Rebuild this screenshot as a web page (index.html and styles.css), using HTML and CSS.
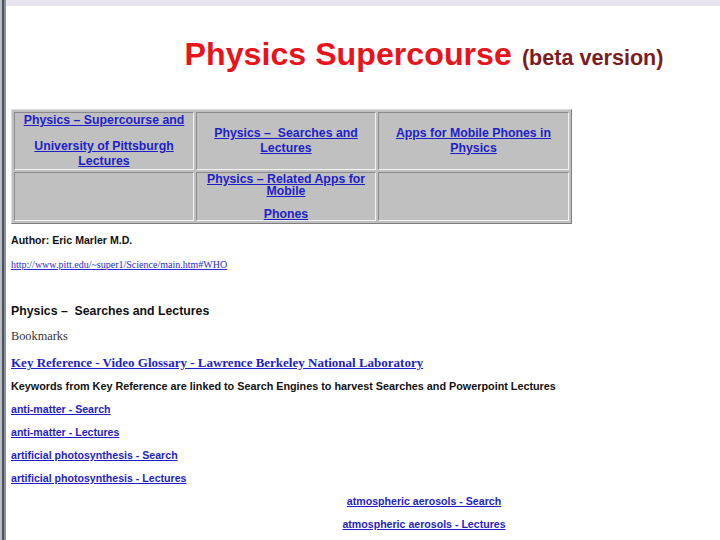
FILE: index.html
```html
<!DOCTYPE html>
<html lang="en">
<head>
<meta charset="utf-8">
<title>Physics Supercourse</title>
<link rel="stylesheet" href="styles.css">
</head>
<body>
<div class="frame">
  <div class="rail"></div>
  <div class="page">
    <div class="topbar"></div>
    <main class="content">
      <h1 class="title shifted">Physics Supercourse <span class="beta">(beta version)</span></h1>

      <table class="nav">
        <tr class="r1">
          <td class="c1">
            <p><a href="#">Physics – Supercourse and</a></p>
            <p><a href="#">University of Pittsburgh Lectures</a></p>
          </td>
          <td class="c2"><a href="#">Physics –&nbsp; Searches and Lectures</a></td>
          <td class="c3"><a href="#">Apps for Mobile Phones in Physics</a></td>
        </tr>
        <tr class="r2">
          <td class="c1"></td>
          <td class="c2 tight">
            <p><a href="#">Physics – Related Apps for Mobile</a></p>
            <p><a href="#">Phones</a></p>
          </td>
          <td class="c3"></td>
        </tr>
      </table>

      <p class="author">Author: Eric Marler M.D.</p>
      <p class="url"><a href="#">http://www.pitt.edu/~super1/Science/main.htm#WHO</a></p>

      <h2 class="section">Physics –&nbsp; Searches and Lectures</h2>
      <p class="bookmarks">Bookmarks</p>
      <p class="keyref"><a href="#">Key Reference - Video Glossary - Lawrence Berkeley National Laboratory</a></p>
      <p class="keywords">Keywords from Key Reference are linked to Search Engines to harvest Searches and Powerpoint Lectures</p>

      <p class="kw"><a href="#">anti-matter - Search</a></p>
      <p class="kw"><a href="#">anti-matter - Lectures</a></p>
      <p class="kw"><a href="#">artificial photosynthesis - Search</a></p>
      <p class="kw"><a href="#">artificial photosynthesis - Lectures</a></p>
      <p class="kw shifted"><a href="#">atmospheric aerosols - Search</a></p>
      <p class="kw shifted"><a href="#">atmospheric aerosols - Lectures</a></p>
    </main>
  </div>
</div>
</body>
</html>
```

FILE: styles.css
```css
html, body {
  margin: 0;
  padding: 0;
  background: #ffffff;
  overflow: hidden;
}

.frame {
  display: flex;
  height: 540px;
}

.rail {
  flex: none;
  width: 6px;
  background: linear-gradient(to right, #b9bdc6 0, #b9bdc6 2px, #4b505b 2px, #4b505b 4px, #8a92a2 4px, #8a92a2 6px);
}

.page {
  flex: 1;
  min-width: 0;
}

.topbar {
  height: 6px;
  background: #e7e3ef;
}

.content {
  padding-left: 5px;
  font-family: "Liberation Sans", Arial, sans-serif;
  color: #111111;
}

.content p {
  margin: 0;
}

.content a {
  color: #1e1ec8;
  text-decoration: underline;
}

/* centred blocks: the page's centre line sits at x=424 */
.shifted {
  padding-left: 117px;
  text-align: center;
}

.title {
  margin: 30px 0 0;
  font-size: 32.2px;
  line-height: 37px;
  font-weight: bold;
  color: #e8131b;
}

.beta {
  font-size: 21.6px;
  line-height: 1;
  color: #7b1c21;
  margin-left: 1px;
}

.nav {
  margin-top: 36px;
  width: 561px;
  table-layout: fixed;
  border-collapse: separate;
  border-spacing: 2px;
  border: 1px solid;
  border-color: #dcdcdc #7f7f7f #7f7f7f #dcdcdc;
  background: #c0c0c0;
}

.nav td {
  box-sizing: border-box;
  border: 1px solid;
  border-color: #8a8a8a #f2f2f2 #f2f2f2 #8a8a8a;
  padding: 0 1px;
  text-align: center;
  vertical-align: middle;
  font-size: 12.3px;
  font-weight: bold;
  line-height: 15px;
}

.nav .c1 { width: 180px; }
.nav .c2 { width: 180px; }
.nav .c3 { width: 191px; }

.nav .r1 td { height: 57px; }
.nav .r2 td { height: 49px; }

.nav td p + p {
  margin-top: 11px;
}

.nav td.tight {
  line-height: 12px;
}

.author {
  margin-top: 10px !important;
  font-size: 10.6px;
  line-height: 13px;
  font-weight: bold;
}

.url {
  margin-top: 11px !important;
  font-family: "Liberation Serif", "Times New Roman", serif;
  font-size: 10px;
  line-height: 13px;
}

.url a {
  color: #2a2ad2;
}

.section {
  margin: 33px 0 0;
  font-size: 12.3px;
  line-height: 15px;
  font-weight: bold;
}

.bookmarks {
  margin-top: 10px !important;
  font-family: "Liberation Serif", "Times New Roman", serif;
  font-size: 12.3px;
  line-height: 15px;
  color: #333333;
}

.keyref {
  margin-top: 11px !important;
  font-family: "Liberation Serif", "Times New Roman", serif;
  font-size: 13px;
  line-height: 15px;
  font-weight: bold;
}

.keywords {
  margin-top: 10px !important;
  font-size: 10.8px;
  line-height: 13px;
  font-weight: bold;
}

.kw {
  margin-top: 10px !important;
  font-size: 10.6px;
  line-height: 13px;
  font-weight: bold;
}
```
